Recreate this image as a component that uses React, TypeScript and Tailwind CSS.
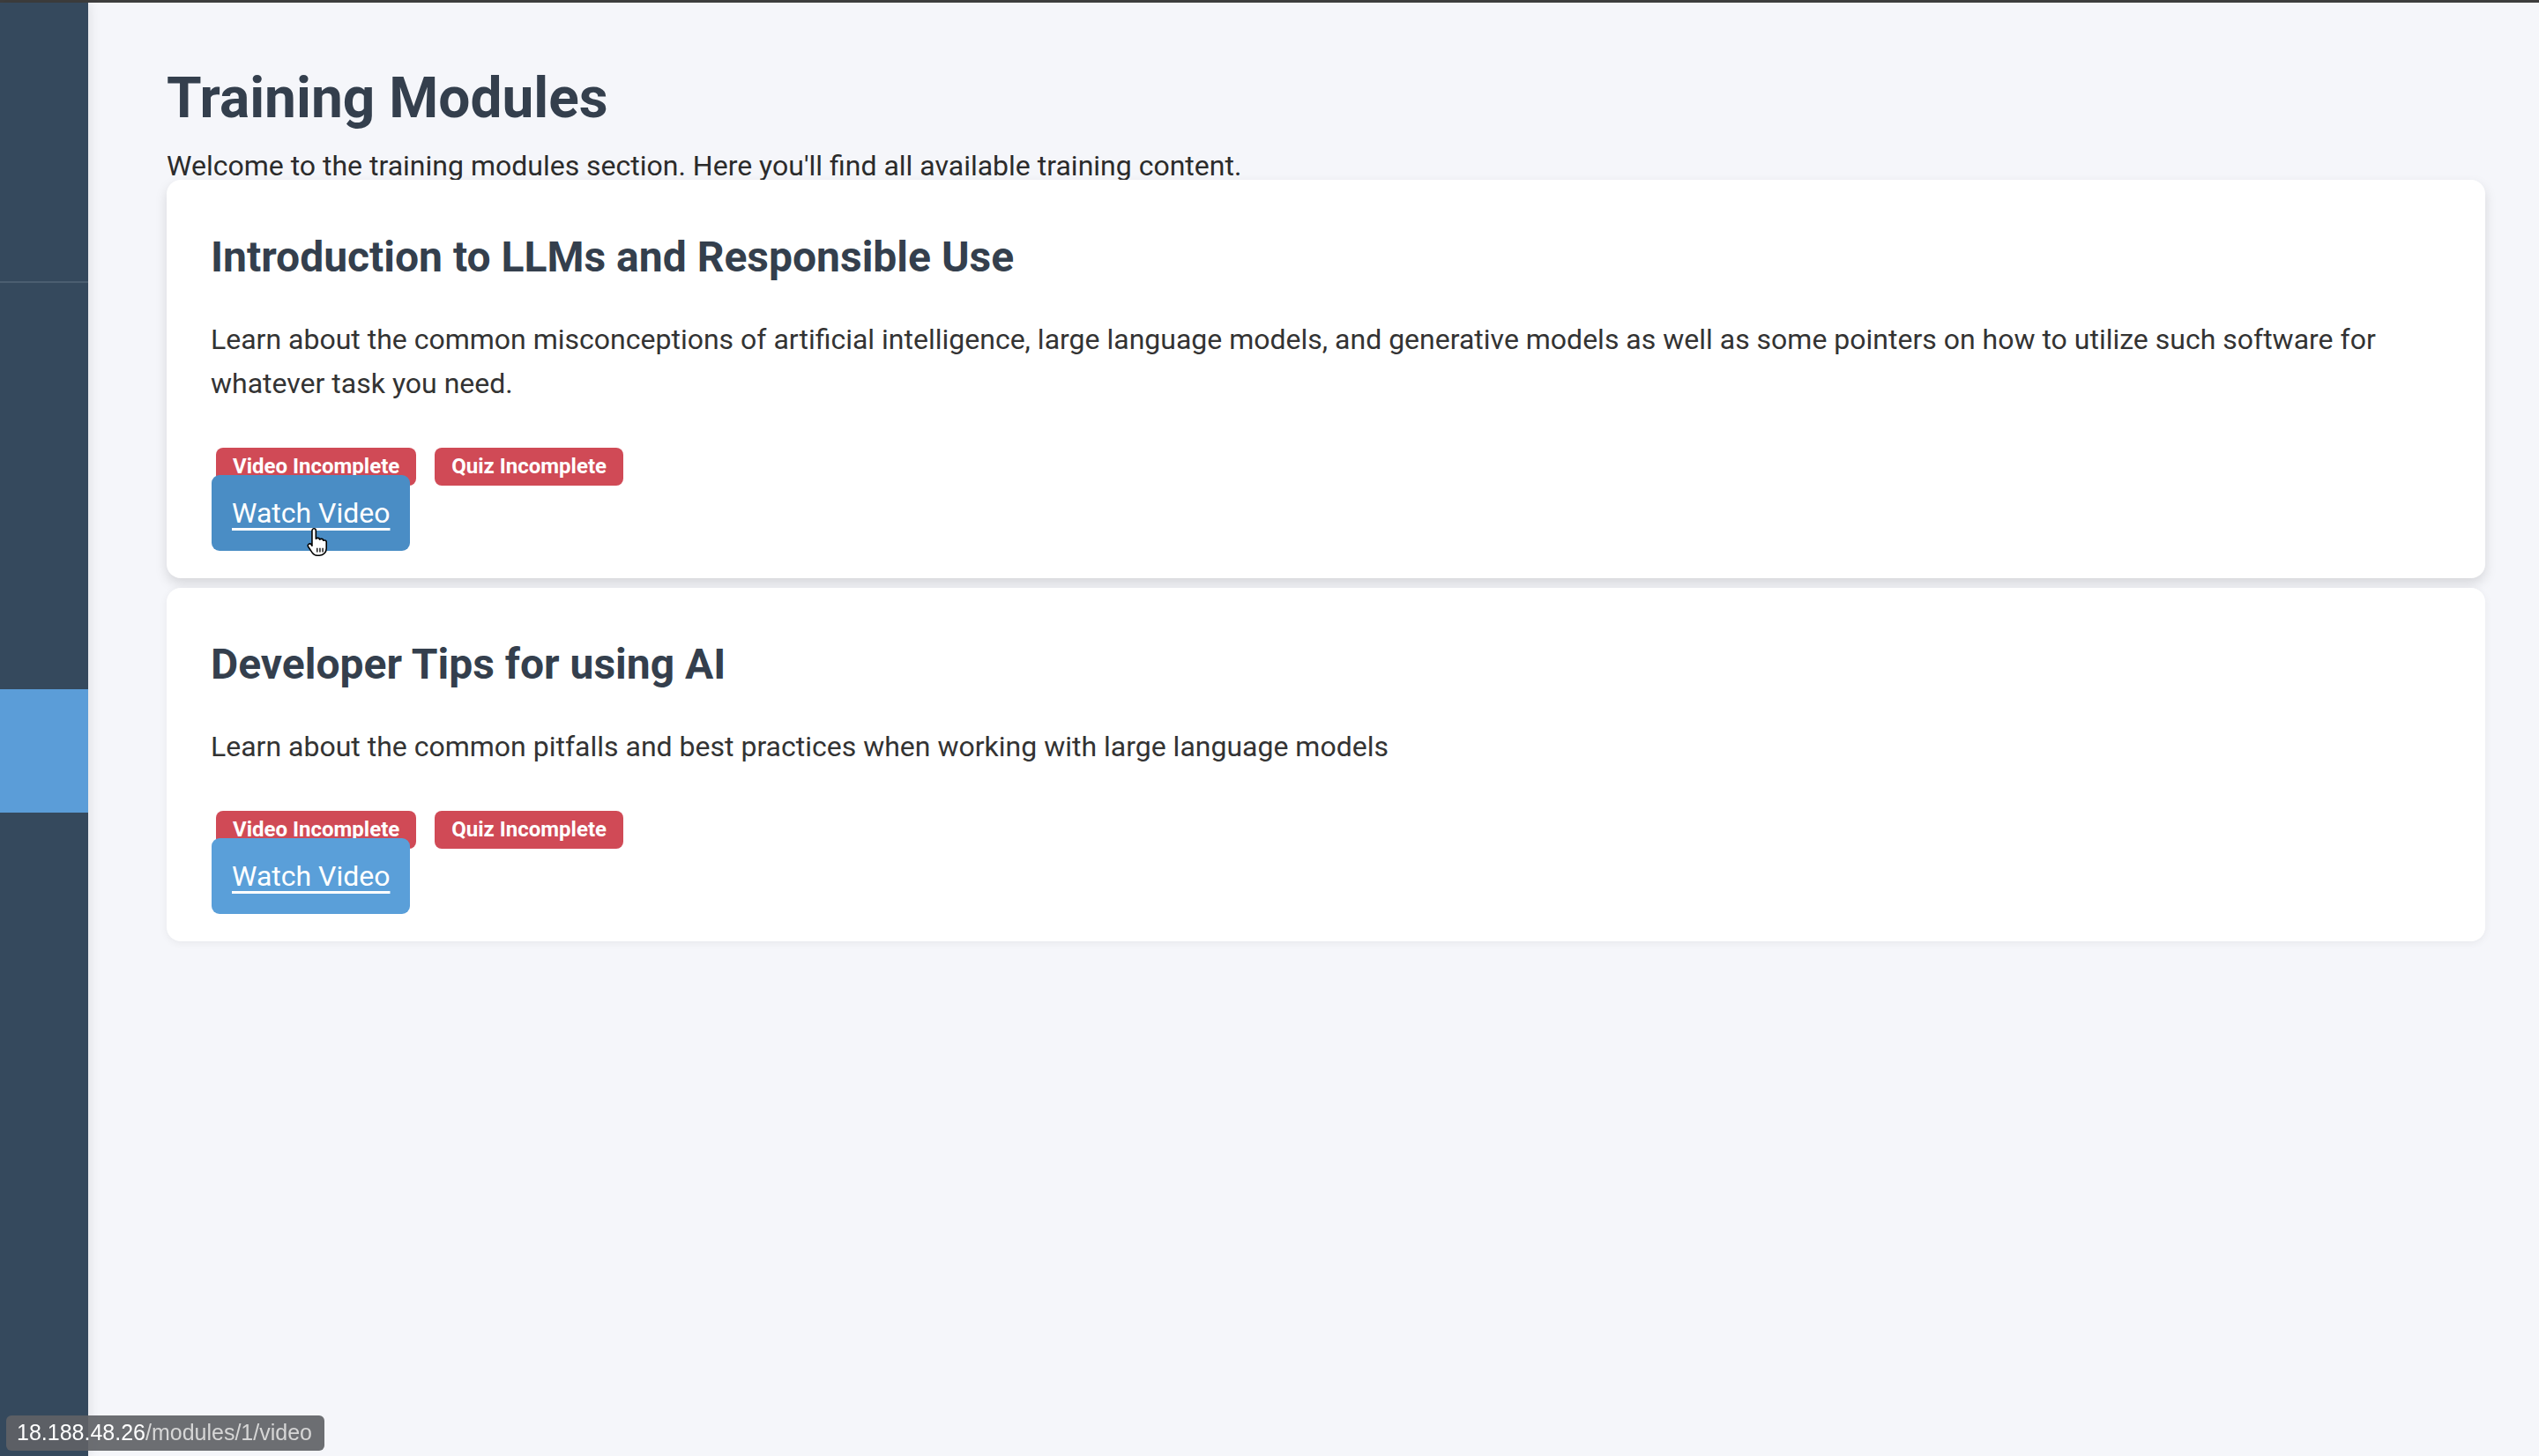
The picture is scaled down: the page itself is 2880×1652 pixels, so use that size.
import React from 'react';

interface Module {
  title: string;
  description: string;
  hovered?: boolean;
}

const modules: Module[] = [
  {
    title: 'Introduction to LLMs and Responsible Use',
    description:
      'Learn about the common misconceptions of artificial intelligence, large language models, and generative models as well as some pointers on how to utilize such software for whatever task you need.',
    hovered: true,
  },
  {
    title: 'Developer Tips for using AI',
    description:
      'Learn about the common pitfalls and best practices when working with large language models',
  },
];

function HandCursor() {
  return (
    <svg
      width="30"
      height="34"
      viewBox="0 0 24 28"
      className="absolute left-[106px] top-[59px] pointer-events-none"
    >
      <path
        d="M8 1.5c1 0 1.8.8 1.8 1.8V11c.4-.5 1-.8 1.7-.8 1 0 1.7.6 1.8 1.4.4-.4 1-.6 1.6-.6 1 0 1.8.7 1.8 1.6.3-.2.7-.3 1.1-.3 1 0 1.8.8 1.8 1.8V20c0 3.5-2.6 6.5-6.5 6.5H11c-2 0-3.5-.9-4.6-2.5L2.6 18.3c-.5-.8-.3-1.9.5-2.4.8-.5 1.8-.3 2.4.4l.7 1.2V3.3c0-1 .8-1.8 1.8-1.8z"
        fill="#fff"
        stroke="#000"
        strokeWidth="1.3"
        strokeLinejoin="round"
      />
      <path d="M11 19.5v4M13.6 19.5v4M16.2 19.5v4" stroke="#000" strokeWidth="1.1" />
    </svg>
  );
}

function ModuleCard({ data }: { data: Module }) {
  return (
    <div
      className={
        data.hovered
          ? 'relative bg-white rounded-[16px] pt-[59px] pb-[31px] pl-[50px] pr-[48px] shadow-[0_6px_14px_rgba(0,0,0,0.13)]'
          : 'relative bg-white rounded-[16px] pt-[58px] pb-[31px] pl-[50px] pr-[48px] shadow-[0_2px_10px_rgba(0,0,0,0.06)]'
      }
    >
      <h2 className="text-[48px] leading-[58px] font-bold text-[#343f4d]">{data.title}</h2>
      <p className="mt-[39px] text-[32px] leading-[50px] text-[#333]">{data.description}</p>
      <div className="mt-[48px] flex items-start">
        <span className="ml-[6px] h-[43px] leading-[43px] px-[19px] rounded-[8px] bg-[#d04a56] text-white text-[24px] font-bold">
          Video Incomplete
        </span>
        <span className="ml-[21px] h-[43px] leading-[43px] px-[19px] rounded-[8px] bg-[#d04a56] text-white text-[24px] font-bold">
          Quiz Incomplete
        </span>
      </div>
      <div className="relative -mt-[12px] ml-[1px]">
        <a
          href="#"
          className={
            data.hovered
              ? 'inline-block h-[86px] leading-[86px] px-[23px] rounded-[9px] bg-[#4a8dc5] text-white text-[32px] underline underline-offset-[6px]'
              : 'inline-block h-[86px] leading-[86px] px-[23px] rounded-[9px] bg-[#5a9fd9] text-white text-[32px] underline underline-offset-[6px]'
          }
        >
          Watch Video
        </a>
        {data.hovered && <HandCursor />}
      </div>
    </div>
  );
}

function App() {
  return (
    <div className="min-h-[1652px] flex flex-col bg-[#f5f6fa] font-['Roboto',sans-serif]">
      <div className="h-[3px] bg-[#3d3d3d]" />
      <div className="flex flex-1">
        {/* 사이드바 */}
        <div className="relative z-10 w-[100px] bg-[#35495d] shadow-[3px_0_12px_rgba(0,0,0,0.08)] flex flex-col">
          <div className="h-[318px] border-b-2 border-[#4b5e70]" />
          <div className="h-[461px]" />
          <div className="h-[140px] bg-[#5b9dd8]" />
        </div>
        <div className="flex-1 pt-[71px] pl-[89px] pr-[61px]">
          <h1 className="text-[64px] leading-[76px] font-bold text-[#343f4d]">Training Modules</h1>
          <p className="mt-[22px] text-[32px] leading-[32px] text-[#2b2b2b]">
            Welcome to the training modules section. Here you'll find all available training content.
          </p>
          <div className="flex flex-col gap-[11px]">
            {modules.map((m) => (
              <ModuleCard key={m.title} data={m} />
            ))}
          </div>
        </div>
      </div>
      <div className="fixed left-[7px] bottom-[6px] z-20 h-[40px] pl-[12px] pr-[14px] flex items-center rounded-[6px] bg-[rgba(95,98,102,0.92)] font-['Liberation_Sans',sans-serif] text-[25px]">
        <span className="text-white">18.188.48.26</span>
        <span className="text-[#d6d6d6]">/modules/1/video</span>
      </div>
    </div>
  );
}

export default App;
